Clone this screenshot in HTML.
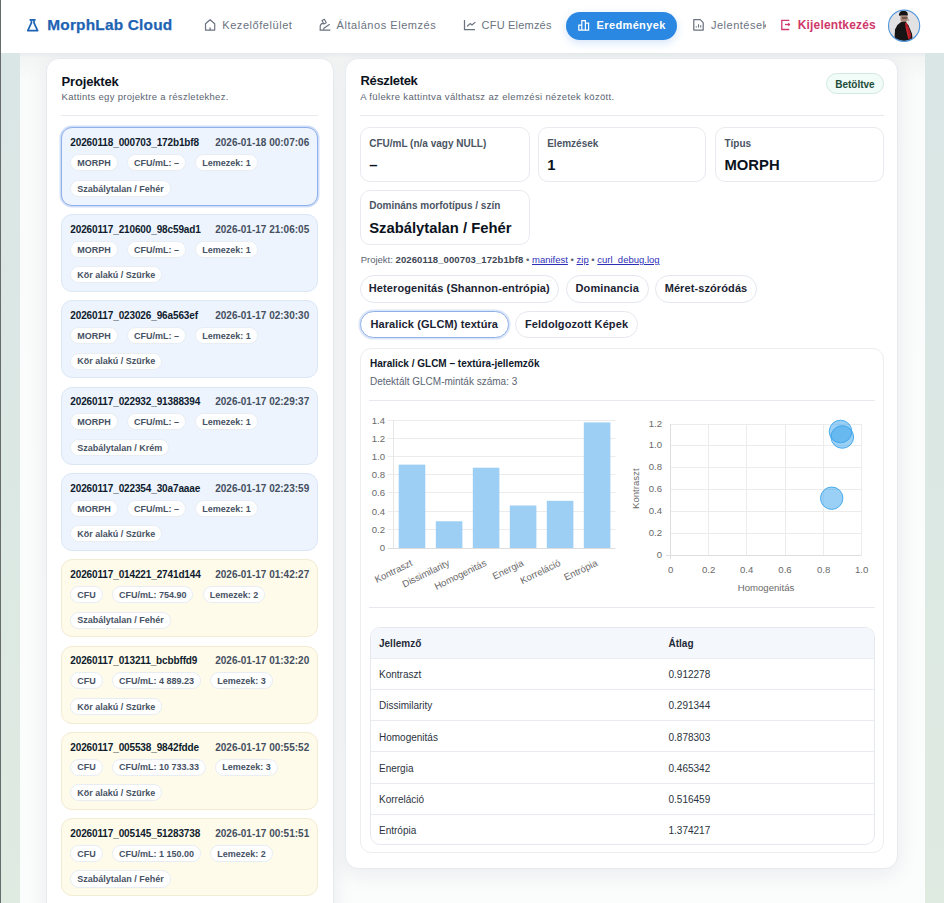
<!DOCTYPE html>
<html lang="hu">
<head>
<meta charset="utf-8">
<title>MorphLab Cloud – Eredmények</title>
<style>
*{box-sizing:border-box;margin:0;padding:0}
html,body{width:944px;height:903px;overflow:hidden}
body{font-family:"Liberation Sans",sans-serif;position:relative;background:linear-gradient(180deg,#dae5e6 0%,#dce8e3 60%,#dfeae1 100%);color:#111827}
.edge{position:absolute;left:0;top:0;width:1px;height:903px;background:#666b6b;z-index:5}
.main{position:absolute;left:20px;top:53px;width:905px;height:850px;background:linear-gradient(180deg,#e8ecec 0px,#f3f5f5 5px,#fafbfb 30px,#fbfcfc 100%)}
header{position:absolute;left:0;top:0;width:944px;height:53px;background:#fff;z-index:3}
.abs{position:absolute;white-space:nowrap}
.nav{font-size:11px;letter-spacing:0.55px;color:#6b7280;top:16.9px;line-height:16px}
.ico{position:absolute}
.panel{position:absolute;background:#fff;border:1px solid #e7eaee;border-radius:13px;box-shadow:0 5px 22px rgba(30,45,55,0.075)}
.ph{font-weight:bold;font-size:13px;color:#0b1220;line-height:16px}
.psub{font-size:9.5px;letter-spacing:0.3px;color:#5b6472;line-height:12px}
.hr{position:absolute;height:1px;background:#e6e9ee}
.card{position:absolute;left:61px;width:256.5px;height:78px;border-radius:11px;border:1px solid #dce7f5;background:#edf4fd;padding:8.8px 7.3px 0 8.3px}
.card.y{background:#fefbeb;border-color:#f2ecd2}
.card.sel{border-color:#8fb0ea;box-shadow:0 0 0 1.5px rgba(120,160,235,0.35)}
.ct{display:flex;justify-content:space-between;font-weight:bold;font-size:10px;line-height:12px;color:#0f1b2d}
.ct span:first-child{letter-spacing:-0.13px}
.ct span:last-child{color:#454f5f}
.pills{display:flex;flex-wrap:wrap;gap:8.5px 9.5px;margin-top:5px}
.pill{font-weight:bold;font-size:9px;line-height:11px;color:#475264;background:#fff;border:1px solid #e8edf3;border-radius:9px;padding:2.9px 5.9px 1.2px 5.9px}

.badge{height:20.8px;width:57.8px;border-radius:11px;border:1px solid #d2e8de;background:#f1fbf7;color:#1d4c3a;font-weight:bold;font-size:10px;line-height:21.4px;text-align:center}
.stat{position:absolute;height:54.9px;border:1px solid #e7eaee;border-radius:10px;background:#fff;padding:0 0 0 9px}
.sl{position:absolute;left:8.2px;top:9.7px;font-size:10px;line-height:12px;font-weight:bold;color:#4b5563;white-space:nowrap}
.sv{position:absolute;left:8.2px;top:28.8px;font-size:14.8px;line-height:17px;font-weight:bold;color:#0b1220;white-space:nowrap}
.proj{font-size:9.5px;line-height:12px;color:#5b6472}
.proj b{color:#3d4654;letter-spacing:0.11px}
.proj u{color:#2d2fb8;text-decoration:underline}
.tab{position:absolute;height:27.2px;border:1px solid #e4e8ee;border-radius:14px;background:#fff;font-size:11px;line-height:25.4px;letter-spacing:0.1px;font-weight:bold;color:#1b2433;text-align:center;white-space:nowrap}
.tab.act{border-color:#90b0e8;box-shadow:0 0 0 1.6px rgba(125,165,235,0.28)}
.panel2{position:absolute;border:1px solid #ebeef1;border-radius:11px;background:#fff}
.tbl{position:absolute;border:1px solid #e5e9ef;border-radius:10px;overflow:hidden;background:#fff}
.tr{display:flex;height:31.1px;border-bottom:1px solid #e8ebf0;font-size:10px;line-height:30px;color:#2b3340}
.tr.last{border-bottom:none;height:29.5px}
.tr.th{height:30.9px;background:#f4f8fc;font-weight:bold;color:#1f2937}
.tr span{padding-left:8.5px;position:relative;top:1.2px}
.tr .c1{width:289.5px}
</style>
</head>
<body>
<div class="edge"></div>
<header>
  <svg class="ico" style="left:26.2px;top:17.8px" width="14" height="15" viewBox="26 18 14 15"><path d="M29.6 19.9h6" stroke="#1e63b3" stroke-width="1.8" stroke-linecap="butt"/><path d="M31.4 20.5v2.4l-3.6 7.8h9.8l-3.6-7.8v-2.4" fill="none" stroke="#1e63b3" stroke-width="1.7" stroke-linejoin="round"/></svg>
  <div class="abs" style="left:47.3px;top:15.9px;font-size:15.4px;line-height:18px;font-weight:bold;color:#1e63b3;letter-spacing:0.2px;-webkit-text-stroke:0.25px #1e63b3">MorphLab Cloud</div>
  <svg class="ico" style="left:200px;top:12px" width="24" height="24" viewBox="200 12 24 24"><path d="M205.5 30.1v-6.3l4.6-4 4.6 4v6.3z" fill="none" stroke="#6b7280" stroke-width="1.2" stroke-linejoin="round"/><path d="M210.1 30v-2.4" stroke="#6b7280" stroke-width="1.3"/></svg>
  <div class="abs nav" style="left:222.3px">Kezelőfelület</div>
  <svg class="ico" style="left:312px;top:12px" width="24" height="24" viewBox="312 12 24 24"><path d="M320 30.1h10M320.2 30v-3.4c0-2 1.6-3.3 3.3-3.3M322 20.5l2.4-1.2 1.8 3.4-2.4 1.3zM323.8 29.8v-1.6l5.6-3.6" fill="none" stroke="#6b7280" stroke-width="1.15" stroke-linejoin="round" stroke-linecap="round"/></svg>
  <div class="abs nav" style="left:336.5px">Általános Elemzés</div>
  <svg class="ico" style="left:458px;top:12px" width="24" height="24" viewBox="458 12 24 24"><path d="M464.5 20v9.5H475" fill="none" stroke="#6b7280" stroke-width="1.25"/><path d="M467.5 26l2.6-2.4 1.9 1.4 3-2.6" fill="none" stroke="#6b7280" stroke-width="1.2" stroke-linejoin="round" stroke-linecap="round"/></svg>
  <div class="abs nav" style="left:481.6px;letter-spacing:0.2px">CFU Elemzés</div>
  <div class="abs" style="left:566px;top:12px;width:111px;height:28px;border-radius:14px;background:#2b88e2;box-shadow:0 3px 9px rgba(60,130,230,0.22)"></div>
  <svg class="ico" style="left:572px;top:12px" width="24" height="24" viewBox="572 12 24 24"><path d="M578.8 25.2h3v5h-3zM581.8 20.6h3.6v9.6h-3.6zM585.4 23.2h3.2v7h-3.2z" fill="none" stroke="#fff" stroke-width="1.2"/></svg>
  <div class="abs" style="left:596.6px;top:16.8px;font-size:11px;line-height:16px;font-weight:bold;color:#fff;letter-spacing:0.36px">Eredmények</div>
  <div class="abs" style="left:686px;top:10px;width:80.2px;height:30px;overflow:hidden">
    <svg class="ico" style="left:0;top:2px" width="24" height="24" viewBox="686 12 24 24"><path d="M693.8 19.6h6.4l3 3v7.4h-9.4z" fill="none" stroke="#6b7280" stroke-width="1.25" stroke-linejoin="round"/><path d="M696.3 27.6v-1.3M698.5 27.6v-3.4M700.7 27.6v-2.3" stroke="#6b7280" stroke-width="1.1"/></svg>
    <div class="abs nav" style="left:25px;top:6.9px;letter-spacing:0.5px">Jelentések</div>
  </div>
  <svg class="ico" style="left:774px;top:12px" width="24" height="24" viewBox="774 12 24 24"><path d="M789.3 20.3h-7.5v9.2h7.5" fill="none" stroke="#d0386a" stroke-width="1.3" stroke-linejoin="miter"/><path d="M785 24.5h5" stroke="#d0386a" stroke-width="1.3"/><path d="M788.2 22.6l2.2 1.9-2.2 1.9z" fill="#d0386a"/></svg>
  <div class="abs" style="left:797.8px;top:16.6px;font-size:12px;line-height:16px;font-weight:bold;color:#d0386a;letter-spacing:0.15px">Kijelentkezés</div>
  <svg class="ico" style="left:884px;top:6px" width="40" height="40" viewBox="884 6 40 40">
    <defs><clipPath id="av"><circle cx="904.1" cy="25.7" r="15.2"/></clipPath></defs>
    <g clip-path="url(#av)">
      <rect x="884" y="6" width="40" height="40" fill="#e2e2e4"/>
      <path d="M899 14.6c0-2.4 2-3.8 4.5-3.8s4.3 1.4 4.3 3.6l-0.2 1.3h-8.4z" fill="#141414"/>
      <path d="M900.6 15.6h6.8l0.2 3.8-1.6 2.8h-4.2l-1.4-2.6z" fill="#a88676"/>
      <path d="M902 17.4h5.6v1.2h-5.6z" fill="#3a2a26"/>
      <path d="M906.8 18.6l2.4 0.4-0.2 2.2-1.8-0.4z" fill="#b9a59a"/>
      <path d="M901 22l4.6-0.2 2.8 3.4 3.6 8.6 0.8 7.5h-18.4l0.6-11.8 2.4-4.6z" fill="#161414"/>
      <path d="M904.8 23.2l1.8-0.4 2.4 5.2 2 6.6-0.6 4.2-2.2 0.5-1.6-7.5z" fill="#b51c26"/>
      <path d="M906 27l1.2 4.4 1.4 5" stroke="#d83440" stroke-width="0.7" fill="none"/>
    </g>
    <circle cx="904.1" cy="25.7" r="15.6" fill="none" stroke="#5094da" stroke-width="1.15"/>
  </svg>
</header>
<div class="main"></div>

<!-- LEFT PANEL -->
<div class="panel" style="left:46px;top:58px;width:287.5px;height:880px">
</div>
<div class="abs ph" style="left:61.5px;top:73.5px;letter-spacing:-0.15px">Projektek</div>
<div class="abs psub" style="left:61.5px;top:91.1px">Kattints egy projektre a részletekhez.</div>
<div class="hr" style="left:61px;top:115px;width:257px"></div>

<div class="card sel" style="top:126.8px;height:79.3px;padding-top:9.6px"><div class="ct"><span>20260118_000703_172b1bf8</span><span>2026-01-18 00:07:06</span></div><div class="pills"><span class="pill">MORPH</span><span class="pill">CFU/mL: –</span><span class="pill">Lemezek: 1</span><span class="pill">Szabálytalan / Fehér</span></div></div>
<div class="card" style="top:213.9px"><div class="ct"><span>20260117_210600_98c59ad1</span><span>2026-01-17 21:06:05</span></div><div class="pills"><span class="pill">MORPH</span><span class="pill">CFU/mL: –</span><span class="pill">Lemezek: 1</span><span class="pill">Kör alakú / Szürke</span></div></div>
<div class="card" style="top:300.2px"><div class="ct"><span>20260117_023026_96a563ef</span><span>2026-01-17 02:30:30</span></div><div class="pills"><span class="pill">MORPH</span><span class="pill">CFU/mL: –</span><span class="pill">Lemezek: 1</span><span class="pill">Kör alakú / Szürke</span></div></div>
<div class="card" style="top:386.6px"><div class="ct"><span>20260117_022932_91388394</span><span>2026-01-17 02:29:37</span></div><div class="pills"><span class="pill">MORPH</span><span class="pill">CFU/mL: –</span><span class="pill">Lemezek: 1</span><span class="pill">Szabálytalan / Krém</span></div></div>
<div class="card" style="top:472.9px"><div class="ct"><span>20260117_022354_30a7aaae</span><span>2026-01-17 02:23:59</span></div><div class="pills"><span class="pill">MORPH</span><span class="pill">CFU/mL: –</span><span class="pill">Lemezek: 1</span><span class="pill">Kör alakú / Szürke</span></div></div>
<div class="card y" style="top:559.2px"><div class="ct"><span>20260117_014221_2741d144</span><span>2026-01-17 01:42:27</span></div><div class="pills"><span class="pill">CFU</span><span class="pill">CFU/mL: 754.90</span><span class="pill">Lemezek: 2</span><span class="pill">Szabálytalan / Fehér</span></div></div>
<div class="card y" style="top:645.5px"><div class="ct"><span>20260117_013211_bcbbffd9</span><span>2026-01-17 01:32:20</span></div><div class="pills"><span class="pill">CFU</span><span class="pill">CFU/mL: 4 889.23</span><span class="pill">Lemezek: 3</span><span class="pill">Kör alakú / Szürke</span></div></div>
<div class="card y" style="top:731.8px"><div class="ct"><span>20260117_005538_9842fdde</span><span>2026-01-17 00:55:52</span></div><div class="pills"><span class="pill">CFU</span><span class="pill">CFU/mL: 10 733.33</span><span class="pill">Lemezek: 3</span><span class="pill">Kör alakú / Szürke</span></div></div>
<div class="card y" style="top:818.1px"><div class="ct"><span>20260117_005145_51283738</span><span>2026-01-17 00:51:51</span></div><div class="pills"><span class="pill">CFU</span><span class="pill">CFU/mL: 1 150.00</span><span class="pill">Lemezek: 2</span><span class="pill">Szabálytalan / Fehér</span></div></div>

<!-- RIGHT PANEL -->
<div class="panel" style="left:345.4px;top:58px;width:552.9px;height:810.5px"></div>

<div class="abs ph" style="left:360.5px;top:73.3px;letter-spacing:-0.33px">Részletek</div>
<div class="abs psub" style="left:360.2px;top:91.1px;letter-spacing:0.35px">A fülekre kattintva válthatsz az elemzési nézetek között.</div>
<div class="abs badge" style="left:826px;top:73px">Betöltve</div>
<div class="hr" style="left:360px;top:114.5px;width:524px"></div>

<div class="stat" style="left:360px;top:127px;width:169.5px"><div class="sl">CFU/mL (n/a vagy NULL)</div><div class="sv">–</div></div>
<div class="stat" style="left:538px;top:127px;width:168.3px"><div class="sl">Elemzések</div><div class="sv">1</div></div>
<div class="stat" style="left:715.3px;top:127px;width:168.5px"><div class="sl">Típus</div><div class="sv">MORPH</div></div>
<div class="stat" style="left:360px;top:189.8px;width:169.5px"><div class="sl">Domináns morfotípus / szín</div><div class="sv">Szabálytalan / Fehér</div></div>

<div class="abs proj" style="left:360.7px;top:254px">Projekt: <b>20260118_000703_172b1bf8</b> • <u>manifest</u> • <u>zip</u> • <u>curl_debug.log</u></div>

<div class="tab" style="left:360px;top:275.4px;width:198.7px">Heterogenitás (Shannon-entrópia)</div>
<div class="tab" style="left:566px;top:275.4px;width:82.5px">Dominancia</div>
<div class="tab" style="left:655.2px;top:275.4px;width:101.6px">Méret-szóródás</div>
<div class="tab act" style="left:360px;top:310.6px;width:148.5px">Haralick (GLCM) textúra</div>
<div class="tab" style="left:515px;top:310.6px;width:123px">Feldolgozott Képek</div>

<div class="panel2" style="left:360px;top:348.3px;width:523.5px;height:504.5px"></div>
<div class="abs" style="left:370px;top:357.5px;font-size:10px;line-height:12px;font-weight:bold;color:#0f172a">Haralick / GLCM – textúra-jellemzők</div>
<div class="abs" style="left:370px;top:375.5px;font-size:10px;line-height:12px;color:#5b6472">Detektált GLCM-minták száma: 3</div>
<div class="hr" style="left:369px;top:400px;width:506px"></div>

<svg class="abs" style="left:360px;top:400px" width="524" height="207" viewBox="360 400 524 207" font-family="Liberation Sans, sans-serif">
  <g stroke="#ececec" stroke-width="1">
    <path d="M387.5 420.5H615.5M387.5 438.5H615.5M387.5 456.5H615.5M387.5 474.5H615.5M387.5 492.5H615.5M387.5 511.5H615.5M387.5 529.5H615.5"/>
  </g>
  <path d="M393.5 420v128" stroke="#e6e6e6"/>
  <path d="M387.5 548.5H615.5" stroke="#dedede"/>
  <g fill="#9dcff4">
    <rect x="398.7" y="464.6" width="26.6" height="83.4"/>
    <rect x="435.8" y="521.3" width="26.6" height="26.7"/>
    <rect x="472.8" y="467.7" width="26.6" height="80.3"/>
    <rect x="509.8" y="505.5" width="26.6" height="42.5"/>
    <rect x="546.8" y="500.8" width="26.6" height="47.2"/>
    <rect x="583.8" y="422.4" width="26.6" height="125.6"/>
  </g>
  <g fill="#6a6a6a" font-size="9.6" text-anchor="end">
    <text x="385" y="423.5">1.4</text>
    <text x="385" y="441.5">1.2</text>
    <text x="385" y="459.5">1.0</text>
    <text x="385" y="478">0.8</text>
    <text x="385" y="496">0.6</text>
    <text x="385" y="514.5">0.4</text>
    <text x="385" y="532.5">0.2</text>
    <text x="385" y="551">0</text>
  </g>
  <g fill="#6a6a6a" font-size="9.6" text-anchor="end">
    <text transform="translate(413.2,565.2) rotate(-26)">Kontraszt</text>
    <text transform="translate(450.2,565.2) rotate(-26)">Dissimilarity</text>
    <text transform="translate(487.2,565.2) rotate(-26)">Homogenitás</text>
    <text transform="translate(524.2,565.2) rotate(-26)">Energia</text>
    <text transform="translate(561.2,565.2) rotate(-26)">Korreláció</text>
    <text transform="translate(598.2,565.2) rotate(-26)">Entrópia</text>
  </g>

  <g stroke="#ececec" stroke-width="1">
    <path d="M670.5 424.5H861.5M670.5 445.5H861.5M670.5 467.5H861.5M670.5 489.5H861.5M670.5 511.5H861.5M670.5 533.5H861.5"/>
    <path d="M708.5 424v131M746.5 424v131M785.5 424v131M823.5 424v131M861.5 424v131"/>
  </g>
  <path d="M670.5 424v135M666 555.5H861.5" stroke="#dedede"/>
  <g fill="#6a6a6a" font-size="9.6" text-anchor="end">
    <text x="662" y="426.7">1.2</text>
    <text x="662" y="447.7">1.0</text>
    <text x="662" y="469.7">0.8</text>
    <text x="662" y="491.7">0.6</text>
    <text x="662" y="513.7">0.4</text>
    <text x="662" y="535.7">0.2</text>
    <text x="662" y="557.7">0</text>
  </g>
  <g fill="#6a6a6a" font-size="9.6" text-anchor="middle">
    <text x="670.6" y="573">0</text>
    <text x="708.7" y="573">0.2</text>
    <text x="746.7" y="573">0.4</text>
    <text x="785" y="573">0.6</text>
    <text x="823.7" y="573">0.8</text>
    <text x="861.7" y="573">1.0</text>
    <text x="766" y="590.5">Homogenitás</text>
    <text transform="translate(639.3,488.7) rotate(-90)">Kontraszt</text>
  </g>
  <g fill="rgba(54,162,235,0.5)" stroke="rgba(54,162,235,0.85)" stroke-width="1">
    <circle cx="840.5" cy="431.5" r="11.3"/>
    <circle cx="842.3" cy="437" r="11.3"/>
    <circle cx="831.7" cy="498.2" r="11.2"/>
  </g>
</svg>

<div class="hr" style="left:369px;top:606.8px;width:506px"></div>

<div class="tbl" style="left:369.5px;top:627.3px;width:505.5px">
  <div class="tr th"><span class="c1">Jellemző</span><span>Átlag</span></div>
  <div class="tr"><span class="c1">Kontraszt</span><span>0.912278</span></div>
  <div class="tr"><span class="c1">Dissimilarity</span><span>0.291344</span></div>
  <div class="tr"><span class="c1">Homogenitás</span><span>0.878303</span></div>
  <div class="tr"><span class="c1">Energia</span><span>0.465342</span></div>
  <div class="tr"><span class="c1">Korreláció</span><span>0.516459</span></div>
  <div class="tr last"><span class="c1">Entrópia</span><span>1.374217</span></div>
</div>

</body>
</html>
